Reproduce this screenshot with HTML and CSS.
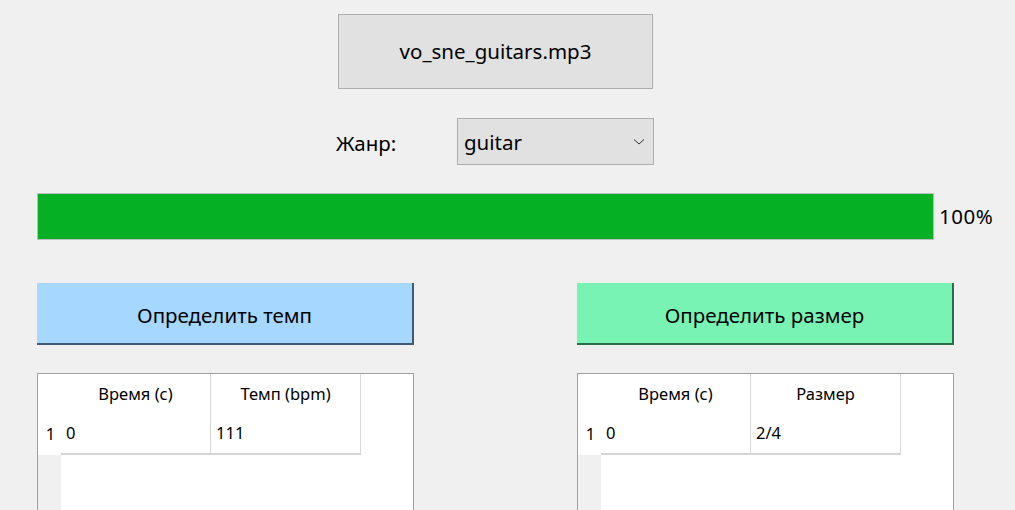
FILE: index.html
```html
<!DOCTYPE html>
<html lang="ru">
<head>
<meta charset="utf-8">
<link rel="stylesheet" href="styles.css">
</head>
<body>
<div class="app">
  <div class="file-row">
    <button class="file-btn">vo_sne_guitars.mp3</button>
  </div>
  <div class="genre-row">
    <span class="genre-label">Жанр:</span>
    <div class="combo">
      <span>guitar</span>
      <svg class="chev" width="12" height="8" viewBox="0 0 12 8"><path d="M1 1.5 L6 6 L11 1.5" fill="none" stroke="#333" stroke-width="1"/></svg>
    </div>
  </div>
  <div class="progress-row">
    <div class="progress"><div class="fill" style="width:100%"></div></div>
    <span class="pct">100%</span>
  </div>
  <div class="pair">
    <button class="act tempo">Определить темп</button>
    <button class="act meter">Определить размер</button>
  </div>
  <div class="pair tables">
    <div class="table">
      <div class="corner"></div>
      <div class="hcell">Время (с)</div>
      <div class="hcell">Темп (bpm)</div>
      <div class="rowhead">1</div>
      <div class="cell">0</div>
      <div class="cell">111</div>
      <div class="filler-head"></div>
    </div>
    <div class="table">
      <div class="corner"></div>
      <div class="hcell">Время (с)</div>
      <div class="hcell">Размер</div>
      <div class="rowhead">1</div>
      <div class="cell">0</div>
      <div class="cell">2/4</div>
      <div class="filler-head"></div>
    </div>
  </div>
</div>
</body>
</html>
```
FILE: styles.css
```css
* { box-sizing: border-box; }
html, body { margin: 0; height: 100%; overflow: hidden; }
body {
  background: #f0f0f0;
  font-family: "Noto Sans", "Open Sans", sans-serif;
  color: #000;
}
.app { padding: 14px 0 0 37px; }
.file-row { padding-left: 301px; }
.file-btn {
  width: 315px; height: 75px;
  background: #e1e1e1;
  border: 1px solid #adadad;
  font: 20.5px "Noto Sans", sans-serif;
  color: #000;
  padding: 0 0 2px;
}
.genre-row {
  display: flex; align-items: center;
  margin-top: 29px;
  padding-left: 299px;
  height: 47px;
}
.genre-label { font-size: 20.5px; width: 121px; padding-top: 2px; }
.combo {
  width: 197px; height: 47px;
  background: #e1e1e1;
  border: 1px solid #adadad;
  display: flex; align-items: center; justify-content: space-between;
  padding: 1px 8px 0 6px;
  font-size: 20.5px;
}
.progress-row {
  display: flex; align-items: center;
  margin-top: 28px;
  height: 47px;
}
.progress {
  width: 897px; height: 47px;
  border: 1px solid #bcbcbc;
  background: #e6e6e6;
}
.fill { height: 100%; background: #06b025; }
.pct { font-size: 20.5px; margin-left: 5px; padding-bottom: 2px; letter-spacing: 0.5px; }
.pair {
  display: grid;
  grid-template-columns: 377px 377px;
  column-gap: 163px;
  margin-top: 43px;
}
.act {
  height: 62px;
  border: none;
  font: 20.5px "Noto Sans", sans-serif;
  color: #000;
  padding: 3px 0 0;
}
.tempo { background: #a6d7ff; border-right: 2px solid #3f5a74; border-bottom: 2px solid #3f5a74; }
.meter { background: #78f3b4; border-right: 2px solid #2c6e4c; border-bottom: 2px solid #2c6e4c; }
.tables { margin-top: 28px; }
.table {
  height: 140px;
  background: #fff;
  border: 1px solid #a0a0a0;
  border-bottom: none;
  display: grid;
  grid-template-columns: 23px 150px 150px 1fr;
  grid-template-rows: 40px 41px 1fr;
  font-size: 16.5px;
}
.corner { background: #fff; grid-column: 1; grid-row: 1; }
.hcell {
  display: flex; align-items: center; justify-content: center;
  border-right: 1px solid #d8d8d8;
  padding-bottom: 2px;
}
.hcell:nth-child(2) { grid-column: 2; grid-row: 1; }
.hcell:nth-child(3) { grid-column: 3; grid-row: 1; }
.rowhead { grid-column: 1; grid-row: 2; display: flex; align-items: center; justify-content: center; padding: 0 0 2px 2px; }
.cell {
  display: flex; align-items: center;
  padding: 0 0 2px 5px;
  border-right: 1px solid #d8d8d8;
  border-bottom: 2px solid #d4d4d4;
}
.table .cell:nth-child(5) { grid-column: 2; grid-row: 2; }
.table .cell:nth-child(6) { grid-column: 3; grid-row: 2; }
.filler-head { grid-column: 1; grid-row: 3; background: #f0f0f0; }
```
